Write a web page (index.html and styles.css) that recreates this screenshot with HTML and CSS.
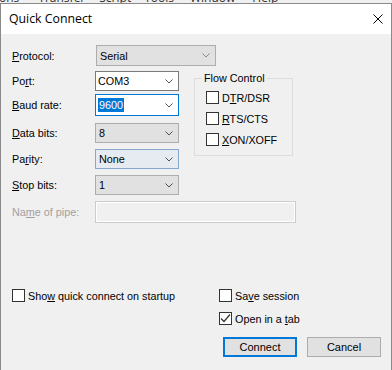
FILE: index.html
```html
<!doctype html>
<html lang="en">
  <head>
    <meta charset="UTF-8" />
    <meta name="viewport" content="width=device-width, initial-scale=1.0" />
    <title>Quick Connect</title>
    <link rel="stylesheet" href="styles.css">
  </head>
  <body>
    <div class="appmenu">
      <span class="m1">ions</span><span class="m2">Transfer</span><span class="m3">Script</span><span class="m4">Tools</span><span class="m5">Window</span><span class="m6">Help</span>
    </div>

    <div class="dialog">
      <div class="titlebar">
        <span class="title">Quick Connect</span>
        <svg class="close" width="10" height="10" viewBox="0 0 10 10">
          <path d="M0.5 0.5 L9.5 9.5 M9.5 0.5 L0.5 9.5" stroke="#000" stroke-width="1" fill="none" />
        </svg>
      </div>

      <div class="content">
        <div class="row protocol-row">
          <span class="lbl"><u>P</u>rotocol:</span>
          <div class="combo combo-list combo-wide">
            <span>Serial</span>
            <svg class="chev light" width="8" height="5" viewBox="0 0 8 5"><path d="M0.5 0.5 L4 4 L7.5 0.5" /></svg>
          </div>
        </div>

        <div class="serial">
          <div class="fields">
            <div class="row port-row">
              <span class="lbl">Po<u>r</u>t:</span>
              <div class="combo combo-edit">
                <span>COM3</span>
                <svg class="chev" width="8" height="5" viewBox="0 0 8 5"><path d="M0.5 0.5 L4 4 L7.5 0.5" /></svg>
              </div>
            </div>
            <div class="row baud-row">
              <span class="lbl"><u>B</u>aud rate:</span>
              <div class="combo combo-edit combo-focus">
                <span class="selected">9600</span>
                <svg class="chev" width="8" height="5" viewBox="0 0 8 5"><path d="M0.5 0.5 L4 4 L7.5 0.5" /></svg>
              </div>
            </div>
            <div class="row list-row first-list">
              <span class="lbl"><u>D</u>ata bits:</span>
              <div class="combo combo-list">
                <span>8</span>
                <svg class="chev" width="8" height="5" viewBox="0 0 8 5"><path d="M0.5 0.5 L4 4 L7.5 0.5" /></svg>
              </div>
            </div>
            <div class="row list-row">
              <span class="lbl">Pa<u>r</u>ity:</span>
              <div class="combo combo-list combo-hover">
                <span>None</span>
                <svg class="chev" width="8" height="5" viewBox="0 0 8 5"><path d="M0.5 0.5 L4 4 L7.5 0.5" /></svg>
              </div>
            </div>
            <div class="row list-row">
              <span class="lbl"><u>S</u>top bits:</span>
              <div class="combo combo-list">
                <span>1</span>
                <svg class="chev" width="8" height="5" viewBox="0 0 8 5"><path d="M0.5 0.5 L4 4 L7.5 0.5" /></svg>
              </div>
            </div>
          </div>

          <fieldset class="flow">
            <legend>Flow Control</legend>
            <div class="check"><span class="box"></span><span>D<u>T</u>R/DSR</span></div>
            <div class="check"><span class="box"></span><span><u>R</u>TS/CTS</span></div>
            <div class="check"><span class="box"></span><span><u>X</u>ON/XOFF</span></div>
          </fieldset>
        </div>

        <div class="row pipe-row">
          <span class="lbl disabled">Na<u>m</u>e of pipe:</span>
          <div class="textbox-disabled"></div>
        </div>

        <div class="options">
          <div class="opt-left">
            <div class="check"><span class="box"></span><span>Sho<u>w</u> quick connect on startup</span></div>
          </div>
          <div class="opt-right">
            <div class="check"><span class="box"></span><span>Sa<u>v</u>e session</span></div>
            <div class="check"><span class="box checked">
              <svg width="11" height="11" viewBox="0 0 11 11"><path d="M1 5.5 L4 8.5 L10 1.5" /></svg>
            </span><span>Open in a <u>t</u>ab</span></div>
          </div>
        </div>

        <div class="buttons">
          <button class="btn btn-default">Connect</button>
          <button class="btn">Cancel</button>
        </div>
      </div>
    </div>
  </body>
</html>
```

FILE: styles.css
```css
body {
  margin: 0;
  width: 392px;
  height: 370px;
  overflow: hidden;
  background: #f0f0f0;
  font-family: "Liberation Sans", Arial, sans-serif;
  font-size: 10.8px;
  color: #000;
}
u {
  text-underline-offset: 1px;
}

/* app menu peeking out above the dialog */
.appmenu {
  height: 3px;
  overflow: hidden;
  background: #f0f0f0;
  display: flex;
  font-family: "Open Sans", sans-serif;
  font-size: 12px;
  line-height: 12px;
  white-space: nowrap;
}
.appmenu span {
  margin-top: -8px;
  color: #333;
}
.appmenu .m1 { margin-left: -4px; }
.appmenu .m2 { margin-left: 19px; }
.appmenu .m3 { margin-left: 14px; }
.appmenu .m4 { margin-left: 13px; }
.appmenu .m5 { margin-left: 16px; }
.appmenu .m6 { margin-left: 17px; }

.dialog {
  width: 390px;
  height: 367px;
  overflow: hidden;
  border: 1px solid #8a8a8a;
  border-bottom: 0;
  background: #f0f0f0;
}
.titlebar {
  height: 30px;
  background: #fff;
  display: flex;
  align-items: center;
  justify-content: space-between;
  padding: 0 8px 0 8px;
}
.title {
  font-family: "Open Sans", "Noto Sans", sans-serif;
  font-size: 12.3px;
  color: #000;
  margin-top: -1px;
}
.close {
  margin-top: -1px;
}

.content {
  padding: 11px 10px 0 11px;
}

.row {
  display: flex;
  align-items: center;
}
.lbl {
  width: 83px;
  flex: none;
}
.lbl.disabled {
  color: #a0a0a0;
}

.combo {
  box-sizing: border-box;
  width: 84px;
  height: 20px;
  display: flex;
  align-items: center;
  justify-content: space-between;
  padding: 0 5px 0 3px;
}
.combo-wide {
  width: 120px;
  height: 21px;
  margin-left: 1px;
  padding-left: 3px;
}
.combo-list {
  background: #e1e1e1;
  border: 1px solid #adadad;
}
.combo-edit {
  background: #fff;
  border: 1px solid #7a7a7a;
  padding-left: 2px;
}
.combo-focus {
  border-color: #0078d7;
  height: 22px;
}
.combo-hover {
  background: #e6ebf1;
  border-color: #86a8cb;
}
.selected {
  background: #0078d7;
  color: #fff;
  line-height: 14px;
  padding: 0 1px;
}
.chev {
  fill: none;
  stroke: #505050;
  stroke-width: 1;
}
.chev.light {
  stroke: #8a8a8a;
}

.protocol-row {
  height: 21px;
}
.serial {
  display: flex;
  align-items: flex-start;
  margin-top: 5px;
}
.port-row {
  height: 20px;
}
.baud-row {
  height: 22px;
  margin-top: 3px;
}
.list-row {
  height: 20px;
  margin-top: 6px;
}
.list-row.first-list {
  margin-top: 7px;
}

.flow {
  box-sizing: border-box;
  width: 99px;
  margin: 1px 0 0 15px;
  padding: 6px 0 9px 11px;
  border: 1px solid #dcdcdc;
  min-width: 0;
}
.flow legend {
  padding: 0 2px;
  margin-left: -4px;
  line-height: 13px;
}
.flow .check + .check {
  margin-top: 8px;
}

.check {
  display: flex;
  align-items: center;
  height: 13px;
  white-space: nowrap;
}
.box {
  box-sizing: border-box;
  width: 13px;
  height: 13px;
  border: 1px solid #333;
  background: #fff;
  margin-right: 3px;
  flex: none;
  display: flex;
  align-items: center;
  justify-content: center;
}
.box.checked svg {
  fill: none;
  stroke: #333;
  stroke-width: 1.2;
}

.pipe-row {
  height: 22px;
  margin-top: 6px;
}
.textbox-disabled {
  box-sizing: border-box;
  width: 201px;
  height: 22px;
  border: 1px solid #cccccc;
  background: #f0f0f0;
  box-shadow: inset 0 0 0 1px #fff;
}

.options {
  display: flex;
  margin-top: 66px;
}
.opt-left {
  width: 207px;
}
.opt-right .check + .check {
  margin-top: 10px;
}

.buttons {
  display: flex;
  justify-content: flex-end;
  gap: 10px;
  margin-top: 12px;
}
.btn {
  box-sizing: border-box;
  width: 74px;
  height: 20px;
  padding: 0;
  background: #e1e1e1;
  border: 1px solid #adadad;
  font-family: "Liberation Sans", Arial, sans-serif;
  font-size: 11px;
  color: #000;
}
.btn-default {
  border: 2px solid #0078d7;
}
```
